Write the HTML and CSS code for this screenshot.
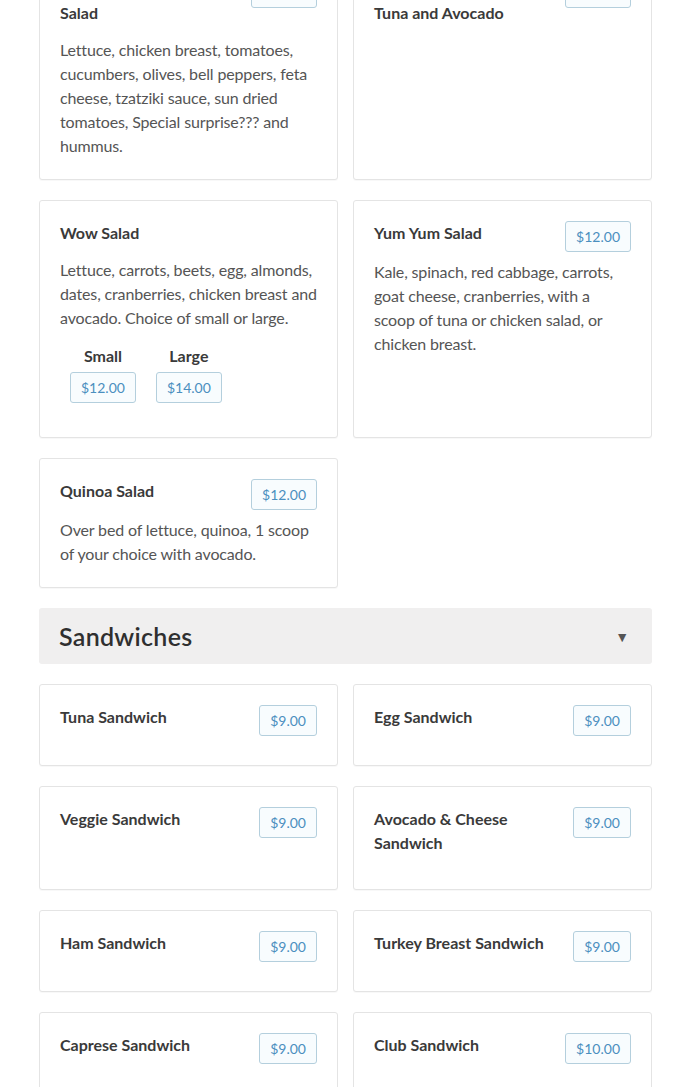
FILE: index.html
```html
<!DOCTYPE html>
<html lang="en">
<head>
<meta charset="utf-8">
<title>Menu</title>
<link rel="stylesheet" href="styles.css">
</head>
<body>
<main class="menu">
  <section class="grid">
    <article class="card">
      <div class="card-head">
        <h3 class="title">Mediterranean Greek Salad</h3>
        <span class="price">$13.00</span>
      </div>
      <p class="desc">Lettuce, chicken breast, tomatoes, cucumbers, olives, bell peppers, feta cheese, tzatziki sauce, sun dried tomatoes, Special surprise??? and hummus.</p>
    </article>
    <article class="card">
      <div class="card-head">
        <h3 class="title">Combination Salad with Tuna and Avocado</h3>
        <span class="price">$13.00</span>
      </div>
    </article>
    <article class="card">
      <div class="card-head">
        <h3 class="title">Wow Salad</h3>
      </div>
      <p class="desc">Lettuce, carrots, beets, egg, almonds, dates, cranberries, chicken breast and avocado. Choice of small or large.</p>
      <div class="sizes">
        <div class="size">
          <span class="size-label">Small</span>
          <span class="price">$12.00</span>
        </div>
        <div class="size">
          <span class="size-label">Large</span>
          <span class="price">$14.00</span>
        </div>
      </div>
    </article>
    <article class="card">
      <div class="card-head">
        <h3 class="title">Yum Yum Salad</h3>
        <span class="price">$12.00</span>
      </div>
      <p class="desc">Kale, spinach, red cabbage, carrots, goat cheese, cranberries, with a scoop of tuna or chicken salad, or chicken breast.</p>
    </article>
    <article class="card">
      <div class="card-head">
        <h3 class="title">Quinoa Salad</h3>
        <span class="price">$12.00</span>
      </div>
      <p class="desc">Over bed of lettuce, quinoa, 1 scoop of your choice with avocado.</p>
    </article>
  </section>

  <header class="section-head">
    <h2 class="section-title">Sandwiches</h2>
    <span class="caret">&#9660;</span>
  </header>

  <section class="grid">
    <article class="card">
      <div class="card-head"><h3 class="title">Tuna Sandwich</h3><span class="price">$9.00</span></div>
    </article>
    <article class="card">
      <div class="card-head"><h3 class="title">Egg Sandwich</h3><span class="price">$9.00</span></div>
    </article>
    <article class="card">
      <div class="card-head"><h3 class="title">Veggie Sandwich</h3><span class="price">$9.00</span></div>
    </article>
    <article class="card">
      <div class="card-head"><h3 class="title">Avocado &amp; Cheese Sandwich</h3><span class="price">$9.00</span></div>
    </article>
    <article class="card">
      <div class="card-head"><h3 class="title">Ham Sandwich</h3><span class="price">$9.00</span></div>
    </article>
    <article class="card">
      <div class="card-head"><h3 class="title">Turkey Breast Sandwich</h3><span class="price">$9.00</span></div>
    </article>
    <article class="card">
      <div class="card-head"><h3 class="title">Caprese Sandwich</h3><span class="price">$9.00</span></div>
    </article>
    <article class="card">
      <div class="card-head"><h3 class="title">Club Sandwich</h3><span class="price">$10.00</span></div>
    </article>
  </section>
</main>
</body>
</html>
```

FILE: styles.css
```css
html, body {
  margin: 0;
  padding: 0;
  background: #ffffff;
}

body {
  font-family: Lato, "Open Sans", "Liberation Sans", sans-serif;
  color: #333;
}

.menu {
  margin: -44px 38px 0 39px;
  display: flex;
  flex-direction: column;
  gap: 20px;
}

.grid {
  display: grid;
  grid-template-columns: 1fr 1fr;
  column-gap: 15px;
  row-gap: 20px;
  align-items: stretch;
}

.card {
  border: 1px solid #e4e4e4;
  border-radius: 3px;
  background: #fff;
  padding: 20px 20px 21px 20px;
  box-shadow: 0 1px 1px rgba(0, 0, 0, 0.03);
}

.card-head {
  display: flex;
  align-items: flex-start;
  justify-content: space-between;
  gap: 20px;
}

.title {
  margin: 0 0 13px 0;
  font-size: 16px;
  line-height: 24px;
  font-weight: 700;
  color: #3a3a3a;
  flex: 1;
}

.price {
  display: inline-block;
  box-sizing: border-box;
  height: 31px;
  line-height: 29px;
  padding: 0 10px;
  border: 1px solid #b4cfdd;
  border-radius: 3px;
  background: #f8fcfe;
  color: #4b8fbf;
  font-size: 14px;
  white-space: nowrap;
  margin-bottom: 8px;
}

.desc {
  margin: 0;
  font-size: 16px;
  line-height: 24px;
  letter-spacing: -0.15px;
  color: #555;
}

.sizes {
  display: flex;
  gap: 20px;
  margin: 15px 0 0 10px;
  padding-bottom: 5px;
}

.size {
  display: flex;
  flex-direction: column;
  align-items: center;
  gap: 5px;
}

.size-label {
  font-size: 16px;
  line-height: 22px;
  font-weight: 700;
  color: #3a3a3a;
}

.section-head {
  display: flex;
  align-items: center;
  justify-content: space-between;
  height: 56px;
  padding: 0 23px 0 20px;
  background: #f0efef;
  border-radius: 3px;
}

.section-title {
  margin: 0;
  font-size: 25px;
  font-weight: 600;
  color: #2f2f2f;
  letter-spacing: 0.3px;
}

.caret {
  font-size: 14px;
  color: #555;
}
```
